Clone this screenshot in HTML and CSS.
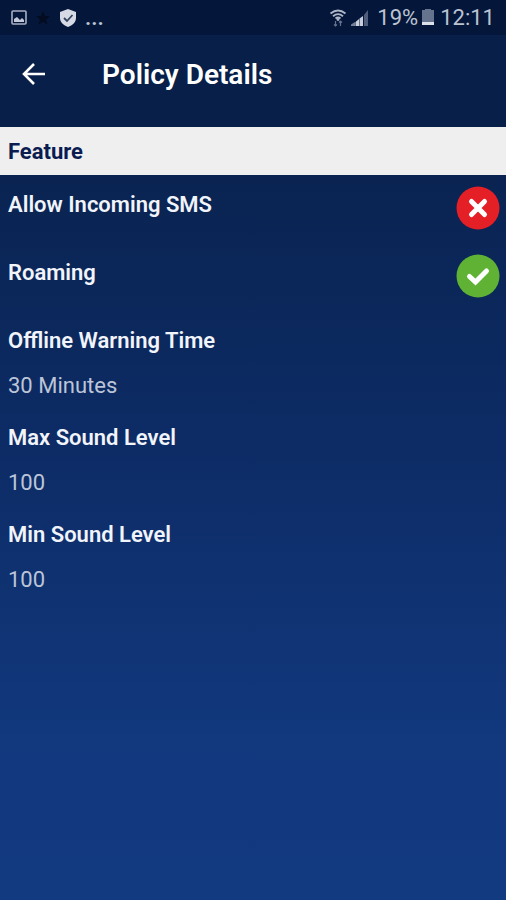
FILE: index.html
```html
<!DOCTYPE html>
<html lang="en">
<head>
<meta charset="utf-8">
<meta name="viewport" content="width=device-width, initial-scale=1">
<title>Policy Details</title>
<link rel="stylesheet" href="styles.css">
</head>
<body>
<div class="status-bar">
  <div class="status-left">
    <svg width="16" height="16" viewBox="0 0 16 16" aria-hidden="true"><rect x="1" y="1" width="14" height="13" rx="1" fill="none" stroke="#a9b0c2" stroke-width="1.6"/><path d="M3 12V9l3-2 3 3 2-2 2 2v2z" fill="#c3c9d8"/></svg>
    <svg width="16" height="16" viewBox="0 0 16 16" aria-hidden="true"><path d="M8 1l2 5 5 .3-4 3.300 1.500 5L8 12l-4.500 2.600 1.500-5-4-3.300L6 6z" fill="#030c20"/></svg>
    <svg width="18" height="20" viewBox="0 0 18 20" aria-hidden="true"><path d="M9 1l8 3v6c0 4-3.500 7.500-8 9-4.500-1.500-8-5-8-9V4z" fill="#d5dae4"/><path d="M5 10l3 3 5.500-6" fill="none" stroke="#34435f" stroke-width="1.800"/></svg>
    <span class="more">...</span>
  </div>
  <div class="status-right">
    <svg width="18" height="18" viewBox="0 0 18 18" aria-hidden="true"><path d="M1.500 4.500Q9-1.500 16.500 4.500M4 7.200Q9 3 14 7.200M6.500 9.500Q9 7.500 11.500 9.500" fill="none" stroke="#aeb6c7" stroke-width="1.800"/><circle cx="9" cy="10.500" r="1.400" fill="#aeb6c7"/><path d="M6.500 12v5M5 15.500l1.500 1.500L8 15.500M11.500 17v-5M10 13.500l1.500-1.500 1.500 1.500" fill="none" stroke="#66718b" stroke-width="1.200"/></svg>
    <svg width="18" height="18" viewBox="0 0 18 18" aria-hidden="true"><path d="M0 17v-1.500L4 13v4z" fill="#77819a"/><path d="M4.500 17v-4L8 10v7zM8.500 17V9.500L12 7v10z" fill="#c9cfda"/><path d="M13 17V6l4-5v16z" fill="#4f5d7b"/></svg>
    <span class="charge">19%</span>
    <svg class="battery" width="12" height="18" viewBox="0 0 12 18" aria-hidden="true"><path d="M3 0h6v1h3v12H0V1h3z" fill="#66738f"/><path d="M0 13h12v3H0z" fill="#dce1e9"/></svg>
    <time>12:11</time>
  </div>
</div>
<header class="app-bar">
  <button class="back" type="button" aria-label="Back">
    <svg width="26" height="26" viewBox="0 0 26 26" aria-hidden="true"><path d="M24 12H3M13 2L3 12l10 10" fill="none" stroke="#fff" stroke-width="2.600"/></svg>
  </button>
  <h1>Policy Details</h1>
</header>
<main>
  <h2>Feature</h2>
  <dl>
    <div class="row">
      <dt>Allow Incoming SMS</dt>
      <dd><svg width="44" height="44" viewBox="0 0 44 44" role="img" aria-label="Off"><circle cx="22" cy="22" r="21.500" fill="#e51f26"/><path d="M15.500 15.500l13 13M28.500 15.500l-13 13" stroke="#fff" stroke-width="5" stroke-linecap="round"/></svg></dd>
    </div>
    <div class="row">
      <dt>Roaming</dt>
      <dd><svg width="44" height="44" viewBox="0 0 44 44" role="img" aria-label="On"><circle cx="22" cy="22" r="21.500" fill="#5fb233"/><path d="M13.500 22.500l6 5.500L30.500 17" fill="none" stroke="#fff" stroke-width="5" stroke-linecap="round"/></svg></dd>
    </div>
    <div class="entry">
      <dt>Offline Warning Time</dt>
      <dd>30 Minutes</dd>
    </div>
    <div class="entry">
      <dt>Max Sound Level</dt>
      <dd>100</dd>
    </div>
    <div class="entry">
      <dt>Min Sound Level</dt>
      <dd>100</dd>
    </div>
  </dl>
</main>
</body>
</html>
```
FILE: styles.css
```css
* {
  box-sizing: border-box;
  margin: 0;
}

body {
  min-height: 100vh;
  background: linear-gradient(#061b44, #0a2453 22%, #0d2c66 50%, #12397f 85%, #123a80);
  color: #f1f4fa;
  font-family: Roboto, sans-serif;
  font-size: 22px;
}

svg {
  display: block;
}

.status-bar {
  display: flex;
  justify-content: space-between;
  align-items: center;
  height: 35px;
  padding: 0 11px;
  background: #04173b;
  color: #bcc3d1;
  line-height: 38px;
}

.status-left,
.status-right {
  display: flex;
  align-items: center;
}

.status-left {
  gap: 8px;
}

.more {
  font-weight: 600;
}

.status-right {
  gap: 4px;
}

.charge {
  margin-left: 4px;
}

.battery {
  margin-right: 2px;
}

.app-bar {
  display: flex;
  align-items: center;
  gap: 55px;
  height: 92px;
  padding: 0 21px 12px;
  background: #081f49;
}

.back {
  padding: 0;
  border: 0;
  background: none;
}

h1 {
  color: #fff;
  font-size: 28px;
  font-weight: 600;
  line-height: 36px;
}

h2 {
  padding: 2px 8px 0;
  background: #efeff0;
  color: #0a1c50;
  font-size: 22px;
  font-weight: 700;
  line-height: 46px;
}

dl {
  padding: 0 6px 0 8px;
}

dt {
  font-weight: 600;
  line-height: 38px;
}

.row {
  display: flex;
  justify-content: space-between;
  align-items: flex-start;
  height: 68px;
  padding-top: 11px;
}

.entry {
  padding-top: 11px;
}

.entry dd {
  margin-top: 4px;
  color: #bcc5d8;
  line-height: 44px;
}
```
